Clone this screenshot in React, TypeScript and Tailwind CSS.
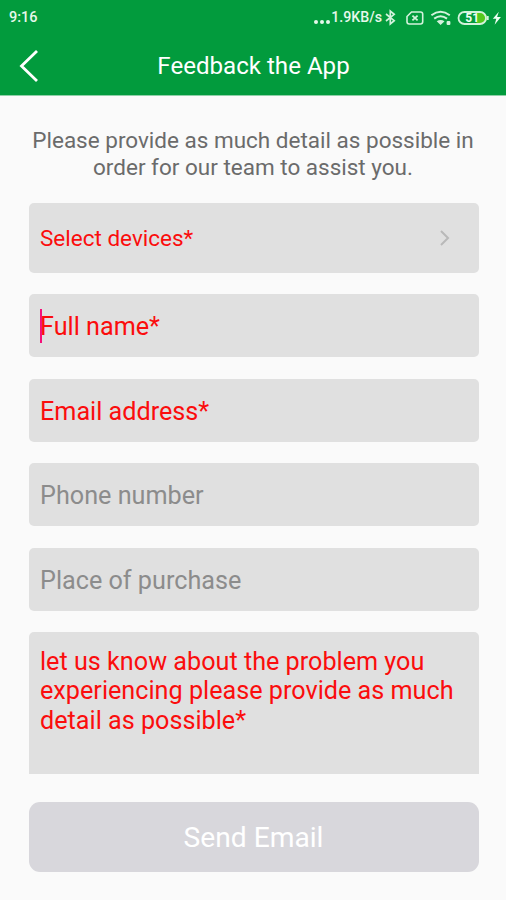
const fields = [
  { label: "Full name*", required: true, focused: true },
  { label: "Email address*", required: true, focused: false },
  { label: "Phone number", required: false, focused: false },
  { label: "Place of purchase", required: false, focused: false },
];

function StatusIcons() {
  return (
    <svg
      className="w-[120px] h-[20px]"
      viewBox="0 0 120 20"
      fill="none"
      stroke="#d3f2dc"
      strokeWidth={1.6}
    >
      {/* Bluetooth */}
      <path d="M1 6l8.200 6.700-3.900 3.300V3l3.900 3.300L1 13" strokeWidth={1.7} />
      {/* No SIM */}
      <path d="M26.500 4H35.500q2.200 0 2.200 2.200v7.600q0 2.200-2.200 2.200H24.200q-2.200 0-2.200-2.200V8.500z" />
      <path d="M27.400 7.600l5.200 4.800M32.600 7.600l-5.200 4.800" strokeWidth={1.800} />
      {/* Wi-Fi */}
      <path d="M46.400 7.200q9.200-7 18.400 0" strokeWidth={2} />
      <path d="M49.200 10.600q6.400-4.800 12.800 0" strokeWidth={2} />
      <path d="M51.700 13.300q3.900-2.800 7.800 0L55.600 17z" fill="#d3f2dc" stroke="none" />
      <rect x="61.600" y="13" width="3.800" height="4" rx="1" fill="#d3f2dc" stroke="none" />
      {/* Battery */}
      <path d="M91.500 4.200h5a5.800 5.800 0 0 1 0 11.600h-5z" fill="#55c91d" stroke="none" />
      <rect x="73.500" y="4" width="27.500" height="12" rx="6" strokeWidth={1.800} />
      <path d="M102.700 8v4" strokeWidth={2} />
      <path d="M113.800 3.800l-6 7h3.500l-1.700 6 6.300-7.700h-3.800z" fill="#effff3" stroke="none" />
      <text
        x="87.200"
        y="14.200"
        textAnchor="middle"
        fill="#effff3"
        stroke="none"
        fontSize="12"
        fontWeight="700"
      >
        51
      </text>
    </svg>
  );
}

export default function App() {
  return (
    <div className="w-[506px] h-[900px] overflow-hidden bg-[#fafafa] font-['Roboto',sans-serif]">
      <header className="h-[96px] bg-[#029b3d] border-b border-[#8fd0a8] text-white">
        <div className="flex h-[36px] items-center justify-between pl-[9px] pr-[1px] text-[#e6f8eb]">
          <span className="text-[14.500px] font-medium">9:16</span>
          <div className="flex items-center">
            <span className="flex gap-[2px] pt-2">
              <span className="size-[4px] rounded-full bg-[#e6f8eb]" />
              <span className="size-[4px] rounded-full bg-[#e6f8eb]" />
              <span className="size-[4px] rounded-full bg-[#e6f8eb]" />
            </span>
            <span className="ml-[1px] mr-[3px] text-[14.200px] font-medium">1.9KB/s</span>
            <StatusIcons />
          </div>
        </div>
        <div className="grid h-[59px] grid-cols-[60px_1fr_60px] items-center">
          <button aria-label="Back" className="pl-[19px]">
            <svg className="w-[20px] h-[32px]" viewBox="0 0 20 32" fill="none" stroke="white" strokeWidth={2.800}>
              <path d="M18 1L2.500 16 18 31" />
            </svg>
          </button>
          <h1 className="pl-[1px] pt-[1px] text-center text-[24.100px]">Feedback the App</h1>
        </div>
      </header>

      <main className="px-[28.500px] pt-[31px]">
        <p className="-mx-2 text-center text-[22.500px] leading-[27px] text-[#6b6b6b]">
          Please provide as much detail as possible in
          <br />
          order for our team to assist you.
        </p>

        <button className="mt-[21.500px] flex h-[70px] w-[450px] items-center justify-between rounded-[5px] bg-[#e0e0e0] pl-[11.500px] pr-[29px]">
          <span className="pt-[2px] text-[22.500px] text-[#fb0d0d]">Select devices*</span>
          <svg className="w-[10px] h-[16px]" viewBox="0 0 10 16" fill="none" stroke="#b9b9b9" strokeWidth={2}>
            <path d="M1 1l7 7-7 7" />
          </svg>
        </button>

        <div className="mt-[21.500px] flex flex-col gap-[21.500px]">
          {fields.map((field) => (
            <div
              key={field.label}
              className="relative flex h-[63px] w-[450px] items-center rounded-[5px] bg-[#e0e0e0] px-[11.500px] pt-[3px]"
            >
              {field.focused && (
                <span className="absolute left-[11.500px] top-[15px] h-[34px] w-[2px] bg-[#f5107a]" />
              )}
              <span
                className={
                  field.required
                    ? "text-[25.200px] text-[#fb0d0d]"
                    : "text-[25.200px] text-[#8c8c8c]"
                }
              >
                {field.label}
              </span>
            </div>
          ))}
        </div>

        <div className="mt-[21px] h-[142.500px] w-[450px] rounded-t-[5px] bg-[#e0e0e0] px-[11.500px] pt-[15px] text-[25.200px] leading-[29.500px] text-[#fb0d0d]">
          let us know about the problem you
          <br />
          experiencing please provide as much
          <br />
          detail as possible*
        </div>

        <button className="mt-[28px] h-[70px] w-[450px] rounded-[11px] bg-[#d8d7dc] pt-[3px] text-[28.200px] text-white">
          Send Email
        </button>
      </main>
    </div>
  );
}
